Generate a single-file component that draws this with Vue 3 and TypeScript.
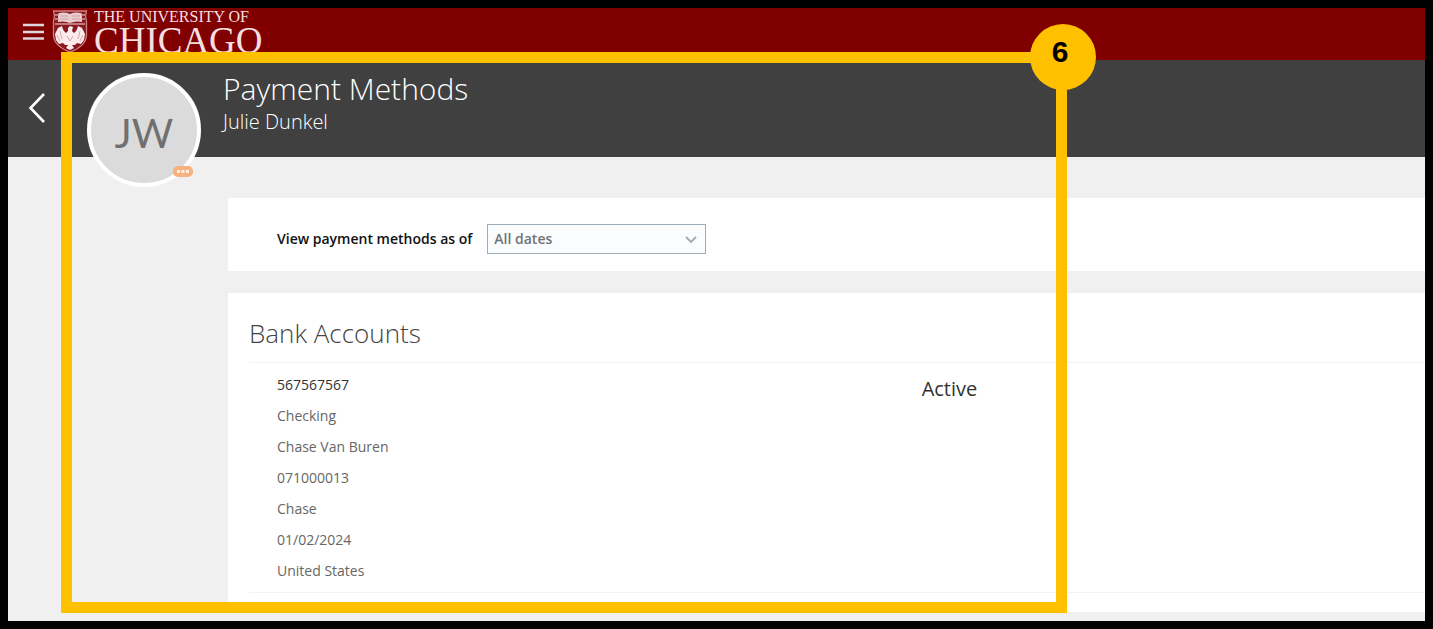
<script setup lang="ts">
import { ref } from 'vue'

interface BankAccount {
  number: string
  status: string
  details: string[]
}

const asOf = ref('All dates')
const dateOptions: string[] = ['All dates']

const accounts: BankAccount[] = [
  {
    number: '567567567',
    status: 'Active',
    details: ['Checking', 'Chase Van Buren', '071000013', 'Chase', '01/02/2024', 'United States'],
  },
]
</script>

<template>
  <div class="stage">
    <header class="brand-bar">
      <button class="menu" type="button" aria-label="Menu">
        <svg viewBox="0 0 21 18" width="21" height="18" aria-hidden="true">
          <path d="M0 2H21M0 9H21M0 15.500H21" stroke="#dfd5de" stroke-width="2.600" />
        </svg>
      </button>
      <a class="logo" href="#">
        <svg class="shield" viewBox="0 0 36 43" width="36" height="43" aria-hidden="true">
          <path d="M1.500 1H34.500L33.500 6L34.500 11V25C34.500 33 27 39 18 42C9 39 1.500 33 1.500 25V11L2.500 6Z" fill="#8b1820" stroke="#c98084" stroke-width="1.300" />
          <path d="M6 3.500Q12 1.500 18 4Q24 1.500 30 3.500V12Q24 10.500 18 13Q12 10.500 6 12Z" fill="#e9cccd" />
          <path d="M3 5H7M3 9H7M29 5H33M29 9H33M3 14H33" stroke="#d49a9d" stroke-width="1.300" />
          <path d="M8 6H16M8 9H16M20 6H28M20 9H28" stroke="#d3a0a3" stroke-width="1" />
          <path d="M16 18L18 16L21 17L20 21L22 23Q25 21 26 16L30 18L33 24L32 30L29 34L25 33L23 35L20 35L22 38L18 40L14 38L16 35H13L11 33L7 34L4 30L3 24L6 18L10 16Q11 21 14 23L16 21Z" fill="#fbeceb" />
          <path d="M8 21L10 29M5 25L8 31M28 21L26 29M31 25L28 31M15 26L18 31L21 26" stroke="#d8a5a7" stroke-width="1" fill="none" />
        </svg>
        <span class="wordmark">
          <span class="wordmark-top">THE UNIVERSITY OF</span>
          <span class="wordmark-main">CHICAGO</span>
        </span>
      </a>
    </header>

    <section class="title-bar">
      <button class="back" type="button" aria-label="Back">
        <svg viewBox="0 0 18 32" width="18" height="32" aria-hidden="true">
          <path d="M16 2L2.500 16L16 30" fill="none" stroke="#fff" stroke-width="2.600" />
        </svg>
      </button>
      <div class="avatar">
        JW
        <button class="avatar-more" type="button" aria-label="More actions">
          <svg viewBox="0 0 20 11" width="20" height="11" aria-hidden="true">
            <rect width="20" height="11" rx="5" fill="#f6b17f" />
            <path d="M4 4H7V7H4ZM8.500 4H11.500V7H8.500ZM13 4H16V7H13Z" fill="#fff1e4" />
          </svg>
        </button>
      </div>
      <div class="titles">
        <h1>Payment Methods</h1>
        <p>Julie Dunkel</p>
      </div>
    </section>

    <main>
      <section class="panel filter">
        <label for="as-of">View payment methods as of</label>
        <span class="select-wrap">
          <select id="as-of" v-model="asOf">
            <option v-for="option in dateOptions" :key="option">{{ option }}</option>
          </select>
          <svg class="caret" viewBox="0 0 12 8" width="12" height="8" aria-hidden="true">
            <path d="M1 1L6 6L11 1" fill="none" stroke="#a5a9ab" stroke-width="1.800" />
          </svg>
        </span>
      </section>

      <section class="panel accounts">
        <h2>Bank Accounts</h2>
        <article v-for="account in accounts" :key="account.number" class="account">
          <ul>
            <li class="number">{{ account.number }}</li>
            <li v-for="detail in account.details" :key="detail">{{ detail }}</li>
          </ul>
          <p class="status">{{ account.status }}</p>
        </article>
      </section>
    </main>

    <div class="highlight">
      <span class="step">6</span>
    </div>
  </div>
</template>

<style>
body {
  margin: 0;
  background: #000;
}
</style>

<style scoped>
.stage {
  position: relative;
  box-sizing: border-box;
  min-height: calc(100vh - 16px);
  margin: 8px;
  background: #f0f0f0;
  font-family: "Open Sans", "Noto Sans", sans-serif;
  display: flow-root;
}

button {
  padding: 0;
  border: 0;
  background: none;
  cursor: pointer;
}

svg {
  display: block;
}

h1,
h2,
p,
ul {
  margin: 0;
  padding: 0;
  font-weight: 300;
}

.brand-bar {
  display: flex;
  align-items: flex-start;
  gap: 8px;
  height: 52px;
  padding-left: 15px;
  background: #800000;
}

.menu {
  margin-top: 15px;
}

.logo {
  display: flex;
  gap: 6px;
  margin-top: 2px;
  color: #f5dfe0;
  text-decoration: none;
  font-family: "Liberation Serif", serif;
}

.wordmark {
  display: flex;
  flex-direction: column;
}

.wordmark-top {
  font-size: 16px;
  line-height: 14px;
}

.wordmark-main {
  font-size: 37px;
  line-height: 34px;
}

.title-bar {
  display: flex;
  align-items: flex-start;
  height: 97px;
  padding-left: 20px;
  background: #404040;
  color: #fff;
}

.back {
  margin-top: 32px;
}

.avatar {
  position: relative;
  box-sizing: border-box;
  width: 114px;
  height: 114px;
  margin: 13px 22px 0 41px;
  border: 4px solid #fff;
  border-radius: 50%;
  background: #dbdbdb;
  color: #707070;
  font-family: Lato, "Open Sans", sans-serif;
  font-size: 40px;
  line-height: 112px;
  text-align: center;
}

.avatar-more {
  position: absolute;
  right: 4px;
  bottom: 6px;
}

.titles h1 {
  margin-top: 8px;
  font-size: 30px;
  line-height: 42px;
}

.titles p {
  font-size: 20px;
  line-height: 24px;
}

main {
  display: flex;
  flex-direction: column;
  gap: 22px;
  padding: 41px 0 9px 220px;
}

.panel {
  background: #fff;
}

.filter {
  display: flex;
  align-items: center;
  gap: 15px;
  height: 73px;
  padding: 8px 49px 0;
  box-sizing: border-box;
  color: #111;
  font-size: 14px;
  font-weight: 600;
}

.select-wrap {
  position: relative;
}

select {
  display: block;
  appearance: none;
  box-sizing: border-box;
  width: 219px;
  height: 30px;
  padding: 0 30px 0 6px;
  border: 1px solid #9badb8;
  border-radius: 0;
  background: #fbfcfe;
  color: #707477;
  font: 600 14px "Open Sans", "Noto Sans", sans-serif;
}

.caret {
  position: absolute;
  top: 12px;
  right: 9px;
  pointer-events: none;
}

.accounts {
  padding: 12px 0 19px 21px;
}

h2 {
  color: #444;
  font-size: 26px;
  line-height: 57px;
}

.account {
  display: grid;
  grid-template-columns: 56fr 44fr;
  column-gap: 4px;
  padding: 6px 0 6px 28px;
  border: solid #f3f3f3;
  border-width: 1px 0;
}

.account ul {
  list-style: none;
  color: #666;
  font-size: 14px;
  font-weight: 400;
  line-height: 31px;
}

.account .number {
  color: #333;
}

.status {
  color: #333;
  font-size: 20px;
  font-weight: 400;
  line-height: 40px;
}

.highlight {
  position: absolute;
  top: 44px;
  bottom: 8px;
  left: 53px;
  box-sizing: border-box;
  width: 71%;
  border: 11px solid #ffc000;
  pointer-events: none;
}

.step {
  position: absolute;
  top: -39px;
  right: -40px;
  box-sizing: border-box;
  width: 66px;
  height: 66px;
  padding-right: 6px;
  border-radius: 50%;
  background: #ffc000;
  color: #000;
  font: bold 30px/56px "Liberation Sans", Arial, sans-serif;
  text-align: center;
}
</style>
